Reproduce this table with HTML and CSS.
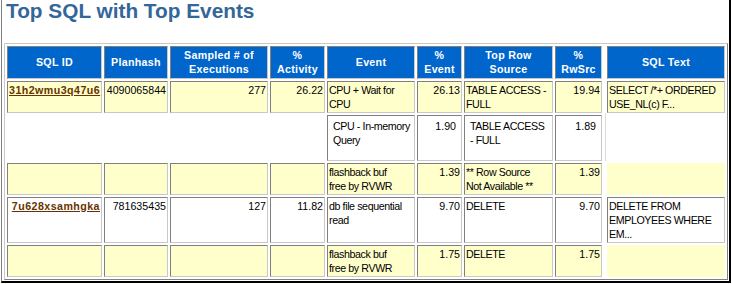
FILE: index.html
```html
<!DOCTYPE html>
<html>
<head>
<meta charset="utf-8">
<title>Top SQL with Top Events</title>
<link rel="stylesheet" href="styles.css">
</head>
<body>
<div class="page">
  <h3 class="title">Top SQL with Top Events</h3>
  <div class="report" role="table">
    <div class="th">SQL ID</div>
    <div class="th">Planhash</div>
    <div class="th">Sampled # of<br>Executions</div>
    <div class="th">%<br>Activity</div>
    <div class="th">Event</div>
    <div class="th">%<br>Event</div>
    <div class="th">Top Row<br>Source</div>
    <div class="th">%<br>RwSrc</div>
    <div class="th last">SQL Text</div>

    <div class="td y r"><a class="sqlid" href="#">31h2wmu3q47u6</a></div>
    <div class="td y r">4090065844</div>
    <div class="td y r">277</div>
    <div class="td y r">26.22</div>
    <div class="td y t">CPU + Wait for<br>CPU</div>
    <div class="td y r">26.13</div>
    <div class="td y t">TABLE ACCESS -<br>FULL</div>
    <div class="td y r">19.94</div>
    <div class="td y t last">SELECT /*+ ORDERED<br>USE_NL(c) F...</div>

    <div class="gap"></div>
    <div class="gap"></div>
    <div class="gap"></div>
    <div class="gap"></div>
    <div class="td w t sub">CPU - In-memory<br>Query</div>
    <div class="td w r sub">1.90</div>
    <div class="td w t sub">TABLE ACCESS<br>- FULL</div>
    <div class="td w r sub">1.89</div>
    <div class="gap edge"></div>

    <div class="td y"></div>
    <div class="td y"></div>
    <div class="td y"></div>
    <div class="td y"></div>
    <div class="td y t">flashback buf<br>free by RVWR</div>
    <div class="td y r">1.39</div>
    <div class="td y t">** Row Source<br>Not Available **</div>
    <div class="td y r">1.39</div>
    <div class="td y last plain"></div>

    <div class="td w r"><a class="sqlid" href="#">7u628xsamhgka</a></div>
    <div class="td w r">781635435</div>
    <div class="td w r">127</div>
    <div class="td w r">11.82</div>
    <div class="td w t">db file sequential<br>read</div>
    <div class="td w r">9.70</div>
    <div class="td w t">DELETE</div>
    <div class="td w r">9.70</div>
    <div class="td w t last">DELETE FROM<br>EMPLOYEES WHERE<br>EM...</div>

    <div class="td y"></div>
    <div class="td y"></div>
    <div class="td y"></div>
    <div class="td y"></div>
    <div class="td y t">flashback buf<br>free by RVWR</div>
    <div class="td y r">1.75</div>
    <div class="td y t">DELETE</div>
    <div class="td y r">1.75</div>
    <div class="td y last plain"></div>
  </div>
</div>
</body>
</html>
```
FILE: styles.css
```css
html, body {
  margin: 0;
  padding: 0;
  background: #ffffff;
}

.page {
  margin: 0 1px 1px 1px;
  border-left: 1px solid #808080;
  border-right: 2px solid #000000;
  border-bottom: 2px solid #000000;
  padding: 0 1px 1px 2px;
}

.title {
  margin: 0 0 22px 0;
  padding: 1px 0 0 2px;
  height: 20px;
  font-family: "Liberation Sans", Arial, sans-serif;
  font-weight: bold;
  font-size: 20.8px;
  line-height: 20px;
  color: #336699;
}

.report {
  display: grid;
  grid-template-columns: 95px 64px 98px 55px 88px 45px 89px 47px 121px;
  grid-template-rows: 33px 32px 46px 32px 46px 32px;
  column-gap: 2px;
  row-gap: 2px;
  padding: 2px;
  border: 1px solid;
  border-color: #c8c8c8 #808080 #808080 #c8c8c8;
  font-family: "Liberation Sans", Arial, sans-serif;
}

.th,
.td {
  border: 1px solid;
  border-color: #808080 #c8c8c8 #c8c8c8 #808080;
  white-space: nowrap;
  font-size: 10.67px;
  line-height: 14px;
}

.th {
  background: #0066cc;
  color: #ffffff;
  font-weight: bold;
  letter-spacing: 0.3px;
  padding: 1px 2px 2px 2px;
  display: flex;
  align-items: center;
  justify-content: center;
  text-align: center;
}

.td {
  padding: 1px;
  color: #000000;
}

.y { background: #ffffcc; }
.w { background: #ffffff; }
.r { text-align: right; }
.t { text-align: left; letter-spacing: -0.4px; }

.sub {
  padding: 3px 5px 1px 5px;
}

.last {
  margin-left: 3px;
}

.plain {
  border-color: #ffffcc;
}

.gap {
  background: #ffffff;
}

.edge {
  margin: -2px 0 0 1px;
  border-left: 1px solid #dcdcdc;
}

.sqlid {
  color: #663300;
  font-weight: bold;
  text-decoration: underline;
  letter-spacing: 0.45px;
}
```
